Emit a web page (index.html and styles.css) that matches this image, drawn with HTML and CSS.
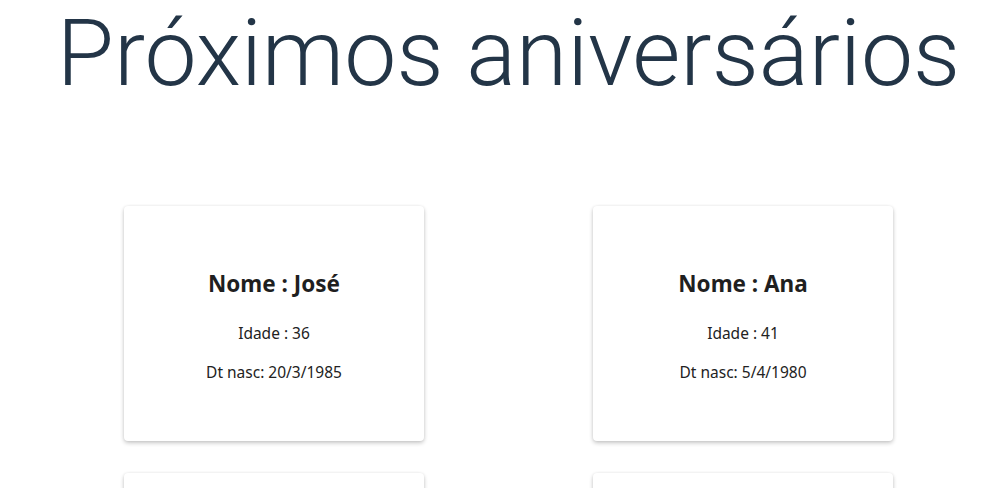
FILE: index.html
```html
<!DOCTYPE html>
<html lang="pt">
<head>
<meta charset="utf-8">
<title>Próximos aniversários</title>
<link rel="stylesheet" href="styles.css">
</head>
<body>
<main class="page">
  <h1 class="title">Próximos aniversários</h1>
  <section class="cards">
    <article class="card">
      <h2 class="card-name">Nome : José</h2>
      <p class="card-line">Idade : 36</p>
      <p class="card-line">Dt nasc: 20/3/1985</p>
    </article>
    <article class="card">
      <h2 class="card-name">Nome : Ana</h2>
      <p class="card-line">Idade : 41</p>
      <p class="card-line">Dt nasc: 5/4/1980</p>
    </article>
    <article class="card">
      <h2 class="card-name">Nome : Maria</h2>
      <p class="card-line">Idade : 30</p>
      <p class="card-line">Dt nasc: 12/6/1991</p>
    </article>
    <article class="card">
      <h2 class="card-name">Nome : Pedro</h2>
      <p class="card-line">Idade : 25</p>
      <p class="card-line">Dt nasc: 8/7/1996</p>
    </article>
  </section>
</main>
</body>
</html>
```

FILE: styles.css
```css
html, body {
  margin: 0;
  padding: 0;
  background: #ffffff;
}

.page {
  padding-left: 10px;
  font-family: "Noto Sans", "Open Sans", sans-serif;
}

.title {
  margin: 0;
  padding-top: 7px;
  font-family: Roboto, sans-serif;
  font-weight: 300;
  font-size: 93px;
  line-height: 93px;
  color: #233547;
  text-align: center;
}

.cards {
  display: grid;
  grid-template-columns: 300px 300px;
  justify-content: center;
  column-gap: 169px;
  row-gap: 32px;
  margin-top: 106px;
}

.card {
  height: 235px;
  box-sizing: border-box;
  padding-top: 64px;
  background: #ffffff;
  border-radius: 4px;
  box-shadow: 0 2px 4px rgba(0, 0, 0, 0.22), 0 0 3px rgba(0, 0, 0, 0.06);
  text-align: center;
  color: #222222;
}

.card-name {
  margin: 0 0 24px;
  font-size: 22.5px;
  font-weight: 700;
  line-height: 28px;
  color: #1f1f1f;
}

.card-line {
  margin: 0 0 17px;
  font-size: 15.5px;
  line-height: 22px;
}
```
